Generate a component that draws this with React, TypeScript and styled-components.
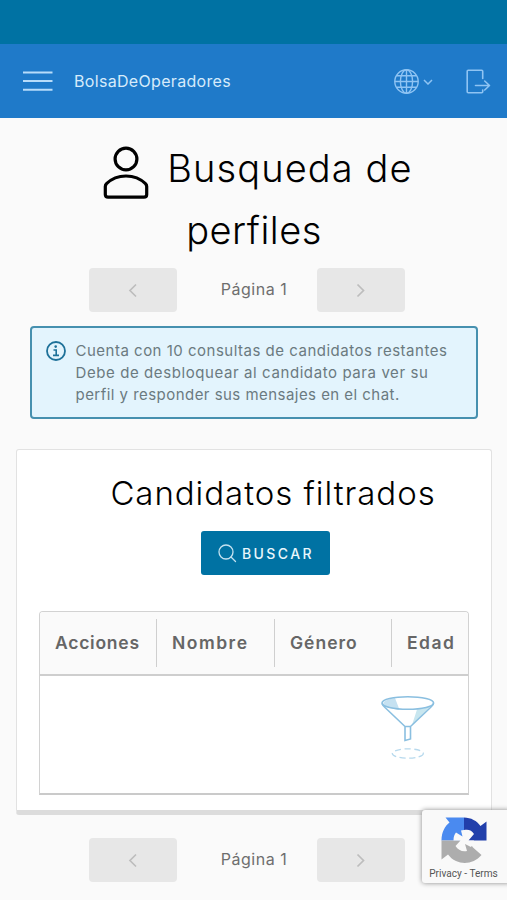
import React from 'react';
import styled, { createGlobalStyle } from 'styled-components';

const GlobalStyle = createGlobalStyle`
  *, *::before, *::after { box-sizing: border-box; }
  body {
    margin: 0;
    background: #fafafa;
    color: #000;
    font-family: Inter, "Liberation Sans", sans-serif;
    font-variant-ligatures: none;
  }
  svg { display: block; flex: none; }
`;

const Page = styled.div`
  position: relative;
  display: flex;
  flex-direction: column;
  width: 507px;
  height: 900px;
  overflow: hidden;
  background: #fafafa;
`;

const StatusStrip = styled.div`
  flex: none;
  height: 44px;
  background: #0072a3;
`;

const Header = styled.header`
  flex: none;
  display: flex;
  align-items: center;
  height: 74px;
  padding: 0 16px 0 23px;
  background: #1f7ac9;
`;

const Brand = styled.span`
  margin-left: 21px;
  font-size: 16px;
  letter-spacing: 0.32px;
  color: #d6ebfb;
`;

const HeaderActions = styled.div`
  display: flex;
  align-items: center;
  margin-left: auto;
`;

const LanguageButton = styled.div`
  display: flex;
  align-items: center;
  gap: 4px;
  margin-right: 33px;
`;

const Title = styled.h1`
  flex: none;
  margin: 19px 0 7px;
  font-size: 38px;
  font-weight: 300;
  line-height: 62px;
`;

const TitleLine = styled.span<{ $spacing: number; $indent: number }>`
  display: flex;
  justify-content: center;
  align-items: center;
  gap: 18px;
  height: 62px;
  padding-left: ${(p) => p.$indent}px;
  letter-spacing: ${(p) => p.$spacing}px;

  svg { margin-top: 7px; }
`;

const Pager = styled.nav`
  flex: none;
  display: flex;
  align-items: center;
  width: 316px;
  margin-left: 88.5px;
`;

const PagerButton = styled.button`
  flex: none;
  display: flex;
  align-items: center;
  justify-content: center;
  width: 88px;
  height: 44px;
  padding: 0;
  border: 0;
  border-radius: 4px;
  background: #e7e7e7;
`;

const PagerLabel = styled.span`
  flex: 1;
  padding: 0 0 2px 15px;
  text-align: center;
  font-size: 16px;
  letter-spacing: 0.5px;
  color: #6e6e6e;
`;

const Alert = styled.section`
  flex: none;
  display: flex;
  align-items: flex-start;
  width: 448px;
  height: 93px;
  margin: 14px 0 0 30px;
  padding: 12px 14px;
  border: 2px solid #4690af;
  border-radius: 4px;
  background: #e3f4fd;

  svg { margin-top: 1px; }
`;

const AlertText = styled.div`
  margin-left: 9.5px;
  font-size: 15px;
  line-height: 22px;
  color: #6b7a80;
`;

const AlertLine = styled.div<{ $spacing: number }>`
  white-space: nowrap;
  letter-spacing: ${(p) => p.$spacing}px;
`;

const Card = styled.section`
  flex: none;
  display: flex;
  flex-direction: column;
  align-items: center;
  width: 476px;
  height: 366px;
  margin: 30px 0 23px 16px;
  padding-top: 21px;
  border: 1px solid #e2e2e2;
  border-bottom: 5px solid #dcdcdc;
  border-radius: 3px;
  background: #fff;
`;

const CardTitle = styled.h2`
  margin: 0;
  padding-left: 38px;
  font-size: 33px;
  font-weight: 300;
  line-height: 44px;
  letter-spacing: 0.95px;
  white-space: nowrap;
`;

const SearchButton = styled.button`
  display: flex;
  align-items: center;
  gap: 5px;
  width: 129px;
  height: 44px;
  margin: 16px 0 36px 23px;
  padding: 0 0 0 17px;
  border: 0;
  border-radius: 3px;
  background: #0072a3;
  color: #e9f6fc;
  font-family: inherit;
  font-size: 14px;
  font-weight: 500;
  letter-spacing: 2.4px;
`;

const Grid = styled.div`
  align-self: flex-start;
  display: flex;
  flex-direction: column;
  width: 430px;
  height: 184px;
  margin-left: 22px;
  border: 1.5px solid #d2d2d2;
  border-bottom: 2px solid #cacaca;
  border-radius: 4px 4px 0 0;
`;

const GridHead = styled.div`
  flex: none;
  display: grid;
  grid-template-columns: 117px 118px 117px 1fr;
  align-items: center;
  height: 64px;
  border-bottom: 2px solid #cecece;
  border-radius: 3px 3px 0 0;
  background: #fafafa;
`;

const GridHeading = styled.div<{ $spacing: number; $last?: boolean }>`
  height: 48px;
  padding-left: 15px;
  border-right: ${(p) => (p.$last ? '0' : '1.5px solid #cfcfcf')};
  font-size: 17.5px;
  font-weight: 600;
  line-height: 48px;
  letter-spacing: ${(p) => p.$spacing}px;
  color: #666;
`;

const GridEmpty = styled.div`
  flex: 1;
  display: flex;
  justify-content: flex-end;
  padding: 17px 32px 0 0;
`;

const CaptchaBadge = styled.aside`
  position: absolute;
  right: -4px;
  top: 810px;
  display: flex;
  flex-direction: column;
  align-items: center;
  width: 89px;
  height: 73px;
  padding: 6px 7px 0 1px;
  border-radius: 3px;
  background: #f9f9f9;
  box-shadow: 0 0 5px #888;
`;

const CaptchaText = styled.span`
  margin-top: 3px;
  font: 400 10.1px/14px Roboto, sans-serif;
  white-space: nowrap;
  color: #555;
`;

const MenuIcon = () => (
  <svg width="30" height="22" viewBox="0 0 30 22" stroke="#b7dcfa" strokeWidth="2">
    <path d="M0 2.500h29.500M0 11.100h29.500M0 19.800h29.500" />
  </svg>
);

const GlobeIcon = () => (
  <svg width="26" height="26" viewBox="0 0 26 26" fill="none" stroke="#8fc4f3" strokeWidth="1.4">
    <circle cx="13.500" cy="13.500" r="11.700" />
    <ellipse cx="13.500" cy="13.500" rx="6.100" ry="11.700" />
    <path d="M13.500 1.800v23.400M1.800 13.500h23.400M3.700 7.700h19.600M3.700 19.300h19.600" />
  </svg>
);

const CaretIcon = () => (
  <svg width="10" height="8" viewBox="0 0 10 8" fill="none" stroke="#8fc4f3" strokeWidth="1.5">
    <path d="m1 3 4 4 4-4" />
  </svg>
);

const LogoutIcon = () => (
  <svg width="25" height="25" viewBox="0 0 25 25" fill="none" stroke="#8fc4f3" strokeWidth="1.600" strokeLinejoin="round" strokeLinecap="round">
    <path d="M16.700 9.500V2.200q0-1-1-1H2.200q-1 0-1 1v20.600q0 1 1 1h13.500q1 0 1-1v-1.800M9.500 16.500h14M18.700 12l4.800 4.500-4.800 4.500" />
  </svg>
);

const UserIcon = () => (
  <svg width="46" height="54" viewBox="0 0 46 54" fill="none" stroke="#000" strokeWidth="3.2" strokeLinejoin="round">
    <circle cx="23" cy="14" r="10.900" />
    <path d="M2.300 41.500q0-1.700 1.200-2.800C8.500 33.800 15.500 31 23 31s14.500 2.800 19.500 7.700q1.200 1.100 1.200 2.800v8q0 2.700-2.700 2.700h-36q-2.700 0-2.700-2.700z" />
  </svg>
);

const AngleIcon = ({ next = false }: { next?: boolean }) => (
  <svg width="10" height="15" viewBox="0 0 10 15" fill="none" stroke="#bdbdbd" strokeWidth="1.700">
    <path d={next ? 'm1.500 1.500 6 6-6 6' : 'm8 1.500-6 6 6 6'} />
  </svg>
);

const InfoIcon = () => (
  <svg width="20" height="20" viewBox="0 0 20 20" fill="none" stroke="#1e7199">
    <circle cx="10" cy="10" r="9" strokeWidth="1.800" />
    <circle cx="9.700" cy="5.600" r="1.300" fill="#1e7199" stroke="none" />
    <path d="M7.500 9h2.700v5.300M7 14.400h6" strokeWidth="1.600" />
  </svg>
);

const SearchIcon = () => (
  <svg width="19" height="19" viewBox="0 0 19 19" fill="none" stroke="#c4e2f0" strokeWidth="1.300" strokeLinecap="round">
    <circle cx="8" cy="8" r="7" />
    <path d="m13 13 4.500 4.500" />
  </svg>
);

const FunnelIcon = () => (
  <svg width="56" height="68" viewBox="0 0 56 68" fill="none" stroke="#8abfe0" strokeWidth="1.600">
    <path d="M3.500 12c3 2.500 9 4 16 4.700L15 5C7 6.300 2 8.500 3.500 12z" fill="#c5e1f1" stroke="none" />
    <path d="M37 16.500c6-.7 11-2 14-4L32 32z" fill="#c8e6ef" stroke="none" />
    <ellipse cx="27.800" cy="10" rx="25.800" ry="6.300" />
    <path d="M2 10.500c.5 1.500 1.500 2.500 3 4l20 19V47.500l5.500-1.500V33.500l20-19c1.500-1.500 2.500-2.500 3-4M25 33.500h5.500" />
    <ellipse cx="27.800" cy="60.500" rx="15.500" ry="4.700" stroke="#b7d9ed" strokeWidth="1.300" strokeDasharray="6 3.500" />
  </svg>
);

const CaptchaIcon = () => (
  <svg width="48" height="48" viewBox="0 0 48 48">
    <path d="M1.500 24.500C1.500 16 5 10 9.500 6.500L5.500 1.500H24V24.500z" fill="#4a8af0" />
    <path d="M24 1.500c7 0 13 3.500 16.500 8.500l6-4.500v19H24z" fill="#213fab" />
    <path d="M1.500 24.500H28l5 7 8.500 7.500C35 47 24 49 16 45c-3.500-1.500-6-4-8-6.500l-6.500 5z" fill="#adadad" />
    <path d="M24 14c4-1 8 0 10 4l-5.500 6.500H34c-1 4-2 5-3 6.500l-6-3 2 7c-5 1-9-1-11.500-5l5-5.500H13.500c0-4 1-6 2.500-8l6.500 4-1.500-6q1-.5 3-.5z" fill="#f9f9f9" />
  </svg>
);

const Pagination = () => (
  <Pager>
    <PagerButton aria-label="Anterior"><AngleIcon /></PagerButton>
    <PagerLabel>Página 1</PagerLabel>
    <PagerButton aria-label="Siguiente"><AngleIcon next /></PagerButton>
  </Pager>
);

export default function App() {
  return (
    <Page>
      <GlobalStyle />
      <StatusStrip />
      <Header>
        <MenuIcon />
        <Brand>BolsaDeOperadores</Brand>
        <HeaderActions>
          <LanguageButton><GlobeIcon /><CaretIcon /></LanguageButton>
          <LogoutIcon />
        </HeaderActions>
      </Header>
      <Title>
        <TitleLine $spacing={1.1} $indent={9}><UserIcon />Busqueda de</TitleLine>
        <TitleLine $spacing={0.5} $indent={1}>perfiles</TitleLine>
      </Title>
      <Pagination />
      <Alert>
        <InfoIcon />
        <AlertText>
          <AlertLine $spacing={0.5}>Cuenta con 10 consultas de candidatos restantes</AlertLine>
          <AlertLine $spacing={0.59}>Debe de desbloquear al candidato para ver su</AlertLine>
          <AlertLine $spacing={0.46}>perfil y responder sus mensajes en el chat.</AlertLine>
        </AlertText>
      </Alert>
      <Card>
        <CardTitle>Candidatos filtrados</CardTitle>
        <SearchButton><SearchIcon />BUSCAR</SearchButton>
        <Grid>
          <GridHead>
            <GridHeading $spacing={0.75}>Acciones</GridHeading>
            <GridHeading $spacing={1.5}>Nombre</GridHeading>
            <GridHeading $spacing={1}>Género</GridHeading>
            <GridHeading $spacing={1.5} $last>Edad</GridHeading>
          </GridHead>
          <GridEmpty><FunnelIcon /></GridEmpty>
        </Grid>
      </Card>
      <Pagination />
      <CaptchaBadge>
        <CaptchaIcon />
        <CaptchaText>Privacy - Terms</CaptchaText>
      </CaptchaBadge>
    </Page>
  );
}
